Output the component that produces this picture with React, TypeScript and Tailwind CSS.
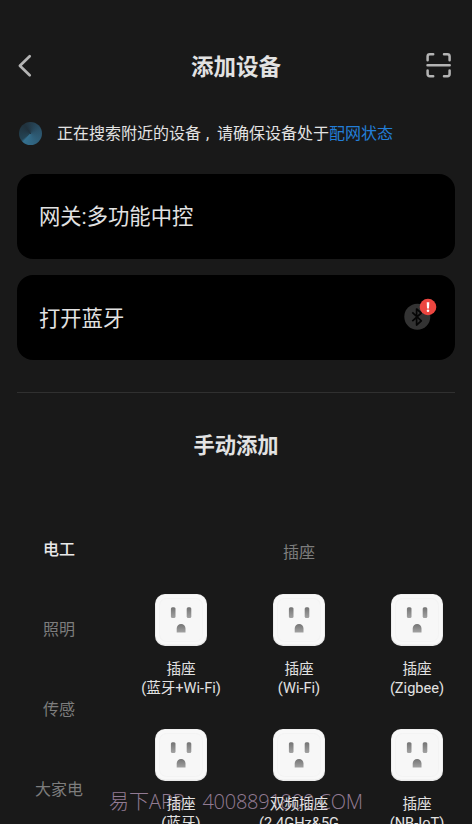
import React from "react";

const categories = ["电工", "照明", "传感", "大家电"];

const sockets: [string, string][] = [
  ["插座", "(蓝牙+Wi-Fi)"],
  ["插座", "(Wi-Fi)"],
  ["插座", "(Zigbee)"],
  ["插座", "(蓝牙)"],
  ["双频插座", "(2.4GHz&5G"],
  ["插座", "(NB-IoT)"],
];

function BackIcon() {
  return (
    <svg width="16" height="24" viewBox="0 0 16 24" fill="none" stroke="#b4b4b4" strokeWidth="2.7" strokeLinecap="round" strokeLinejoin="round">
      <path d="M13.7 2.2 3.9 11.7l9.8 9.5" />
    </svg>
  );
}

function ScanIcon() {
  return (
    <svg width="26" height="26" viewBox="0 0 26 26" fill="none" stroke="#b4b4b4" strokeWidth="2.5" strokeLinecap="round">
      <path d="M1.6 7.2V3.5Q1.6 1.3 3.8 1.3H7.2M18 1.3h3.4Q23.6 1.3 23.6 3.5V7.2M23.6 17.6v3.4Q23.6 23.2 21.4 23.2H18M7.2 23.2H3.8Q1.6 23.2 1.6 21V17.6M1.5 12.3h22.2" />
    </svg>
  );
}

function BluetoothBadge() {
  return (
    <svg width="34" height="34" viewBox="0 0 34 34" fill="none">
      <circle cx="14.3" cy="19.7" r="13" fill="#333" />
      <path d="m9.3 15.3 9 8.5-4.7 4.2V12l4.7 4-9 8.2" stroke="#050505" strokeWidth="1.7" strokeLinejoin="round" />
      <circle cx="25" cy="10" r="8.3" fill="#ec4640" />
      <path d="M23.7 5.2h2.6l-.3 6.2h-2z" fill="#fff" />
      <circle cx="25" cy="13.7" r="1.3" fill="#fff" />
    </svg>
  );
}

function SocketIcon() {
  return (
    <svg className="shrink-0" width="52" height="52" viewBox="0 0 52 52">
      <defs>
        <linearGradient id="slot" x1="0" y1="0" x2="0" y2="1">
          <stop offset="0" stopColor="#747474" />
          <stop offset="1" stopColor="#a2a2a2" />
        </linearGradient>
      </defs>
      <rect width="52" height="52" rx="10" fill="#e9e9e9" />
      <rect x=".8" y=".5" width="50.4" height="50" rx="9.5" fill="#f8f8f8" />
      <rect x="4.5" y="4.5" width="43" height="43" rx="7" fill="#f7f7f7" stroke="#f1f1f1" strokeWidth=".8" />
      <rect x="15.9" y="13.3" width="4.6" height="10.7" rx="1.5" fill="url(#slot)" />
      <rect x="31.7" y="13.3" width="4.6" height="10.7" rx="1.5" fill="url(#slot)" />
      <path d="M21.7 38.5v-4.1a4.4 4.4 0 0 1 8.8 0v4.1z" fill="url(#slot)" />
    </svg>
  );
}

export default function App() {
  return (
    <div className="relative flex h-[824px] w-[472px] flex-col overflow-hidden bg-[#191919] font-[Roboto,'Noto_Sans_CJK_SC',sans-serif] text-[#e2e2e2]">
      <header className="mt-[42px] flex h-12 shrink-0 items-center justify-between pr-5 pl-4">
        <div className="w-[30px]"><BackIcon /></div>
        <h1 className="pt-px text-[22.5px] leading-8 font-bold">添加设备</h1>
        <ScanIcon />
      </header>

      <div className="mt-[31px] flex h-6 shrink-0 items-center pl-[19px]">
        <div className="size-[23px] rounded-full bg-[conic-gradient(from_235deg,#244454,#20313c_25%,#2b5269_55%,#34708f_96%,#244454)]" />
        <p className="ml-[15px] pt-[2px] text-[16px] leading-6 whitespace-nowrap">
          正在搜索附近的设备<span className="inline-block w-4 pl-[5px]">,</span>请确保设备处于<span className="text-[#237ed8]">配网状态</span>
        </p>
      </div>

      <section className="mt-[29px] flex shrink-0 flex-col gap-4 px-[17px] text-[21.3px] leading-8">
        <div className="flex h-[85px] items-center rounded-2xl bg-black px-[22px] pt-px">网关:多功能中控</div>
        <div className="flex h-[85px] items-center justify-between rounded-2xl bg-black pt-[2px] pr-[18px] pl-[22px]">
          <span>打开蓝牙</span>
          <div className="-mt-[9px]"><BluetoothBadge /></div>
        </div>
      </section>

      <div className="mx-[17px] mt-8 h-px shrink-0 bg-[#303030]" />
      <h2 className="mt-[37px] shrink-0 text-center text-[21.3px] leading-8 font-bold">手动添加</h2>

      <main className="mt-[47px] flex shrink-0">
        <nav className="flex w-[118px] shrink-0 flex-col text-center text-[16px] text-[#7d7d7d]">
          {categories.map((name, i) => (
            <div key={name} className={i === 0 ? "h-20 pt-[29px] leading-6 font-medium text-[#e8e8e8]" : "h-20 pt-[29px] leading-6"}>
              {name}
            </div>
          ))}
        </nav>
        <div className="w-[354px] shrink-0">
          <h3 className="pt-8 pl-[8px] text-center text-[16px] leading-6 text-[#7d7d7d]">插座</h3>
          <div className="mt-[29px] ml-1 grid w-[354px] grid-cols-3">
            {sockets.map(([name, detail], i) => (
              <div key={i} className="flex h-[135px] flex-col items-center text-center text-[14.6px] leading-5">
                <SocketIcon />
                <div className="relative z-10 mt-[13px] whitespace-nowrap">
                  <div>{name}</div>
                  <div className="-mt-px">{detail}</div>
                </div>
              </div>
            ))}
          </div>
        </div>
      </main>

      <div className="absolute top-[790px] left-[109px] font-['Open_Sans','Noto_Sans_CJK_SC',sans-serif] text-[20px] leading-6 font-light whitespace-nowrap text-[#927b93]">
        易下APP<span className="inline-block w-[18px] text-center">·</span><span className="tracking-[-0.25px]">4008891800.COM</span>
      </div>
    </div>
  );
}
